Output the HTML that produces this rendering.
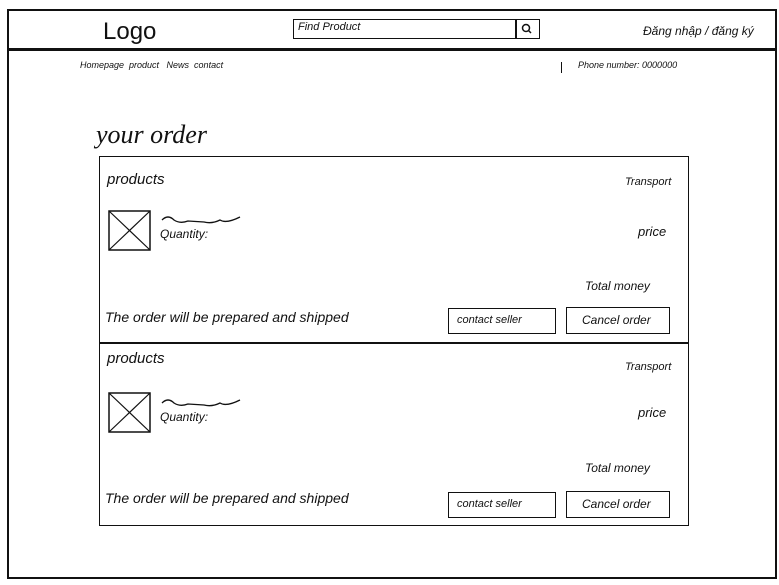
<!DOCTYPE html>
<html><head><meta charset="utf-8"><style>
body{margin:0;width:779px;height:585px;background:#fff;position:relative;overflow:hidden;font-family:"Liberation Sans",sans-serif;font-style:italic;color:#111}
.a{position:absolute}
.box{position:absolute;border:1.5px solid #111;box-sizing:border-box}
.t{position:absolute;white-space:nowrap}
</style></head><body>
<div class="box" style="left:7px;top:9px;width:770px;height:570px;border-width:2px"></div>
<div class="a" style="left:7px;top:48px;width:770px;height:3px;background:#111"></div>
<div class="t" style="left:103px;top:18px;font-size:24px;font-style:normal">Logo</div>
<div class="box" style="left:293px;top:19px;width:247px;height:20px"></div>
<div class="a" style="left:515px;top:19px;width:1.5px;height:20px;background:#111"></div>
<div class="t" style="left:298px;top:21px;font-size:11px">Find Product</div>
<svg class="a" style="left:520px;top:22px" width="14" height="14"><circle cx="6" cy="6" r="3.5" fill="none" stroke="#111" stroke-width="1.5"/><line x1="8.5" y1="8.5" x2="11" y2="11" stroke="#111" stroke-width="1.5"/></svg>
<div class="t" style="left:643px;top:24px;font-size:12px">Đăng nhập / đăng ký</div>
<div class="t" style="left:80px;top:60px;font-size:9px">Homepage &nbsp;product &nbsp;&nbsp;News &nbsp;contact</div>
<div class="a" style="left:561px;top:62px;width:1px;height:11px;background:#111"></div>
<div class="t" style="left:578px;top:60px;font-size:9px">Phone number: 0000000</div>
<div class="t" style="left:96px;top:120px;font-size:26px;font-family:'Liberation Serif',serif">your order</div>

<div class="box" style="left:99px;top:156px;width:590px;height:188px"></div>
<div class="box" style="left:99px;top:342px;width:590px;height:184px"></div>

<div class="t" style="left:107px;top:171px;font-size:15px">products</div>
<div class="t" style="left:625px;top:176px;font-size:11px">Transport</div>
<svg class="a" style="left:108px;top:210px" width="43" height="41"><rect x="1" y="1" width="41" height="39" fill="none" stroke="#111" stroke-width="1.5"/><path d="M1 1L42 40M42 1L1 40" stroke="#111" stroke-width="1.2"/></svg>
<svg class="a" style="left:160px;top:212px" width="82" height="14"><path d="M2 8Q8 2 14 8Q20 12 28 9L44 10Q52 12 60 8Q66 12 80 5" fill="none" stroke="#111" stroke-width="1.3"/></svg>
<div class="t" style="left:160px;top:227px;font-size:12px">Quantity:</div>
<div class="t" style="left:638px;top:224px;font-size:13px">price</div>
<div class="t" style="left:585px;top:279px;font-size:12px">Total money</div>
<div class="t" style="left:105px;top:309px;font-size:14px">The order will be prepared and shipped</div>
<div class="box" style="left:448px;top:308px;width:108px;height:26px"></div>
<div class="t" style="left:457px;top:314px;font-size:11px">contact seller</div>
<div class="box" style="left:566px;top:307px;width:104px;height:27px"></div>
<div class="t" style="left:582px;top:313px;font-size:12px">Cancel order</div>

<div class="t" style="left:107px;top:350px;font-size:15px">products</div>
<div class="t" style="left:625px;top:361px;font-size:11px">Transport</div>
<svg class="a" style="left:108px;top:392px" width="43" height="41"><rect x="1" y="1" width="41" height="39" fill="none" stroke="#111" stroke-width="1.5"/><path d="M1 1L42 40M42 1L1 40" stroke="#111" stroke-width="1.2"/></svg>
<svg class="a" style="left:160px;top:395px" width="82" height="14"><path d="M2 8Q8 2 14 8Q20 12 28 9L44 10Q52 12 60 8Q66 12 80 5" fill="none" stroke="#111" stroke-width="1.3"/></svg>
<div class="t" style="left:160px;top:410px;font-size:12px">Quantity:</div>
<div class="t" style="left:638px;top:405px;font-size:13px">price</div>
<div class="t" style="left:585px;top:461px;font-size:12px">Total money</div>
<div class="t" style="left:105px;top:490px;font-size:14px">The order will be prepared and shipped</div>
<div class="box" style="left:448px;top:492px;width:108px;height:26px"></div>
<div class="t" style="left:457px;top:498px;font-size:11px">contact seller</div>
<div class="box" style="left:566px;top:491px;width:104px;height:27px"></div>
<div class="t" style="left:582px;top:497px;font-size:12px">Cancel order</div>
</body></html>
